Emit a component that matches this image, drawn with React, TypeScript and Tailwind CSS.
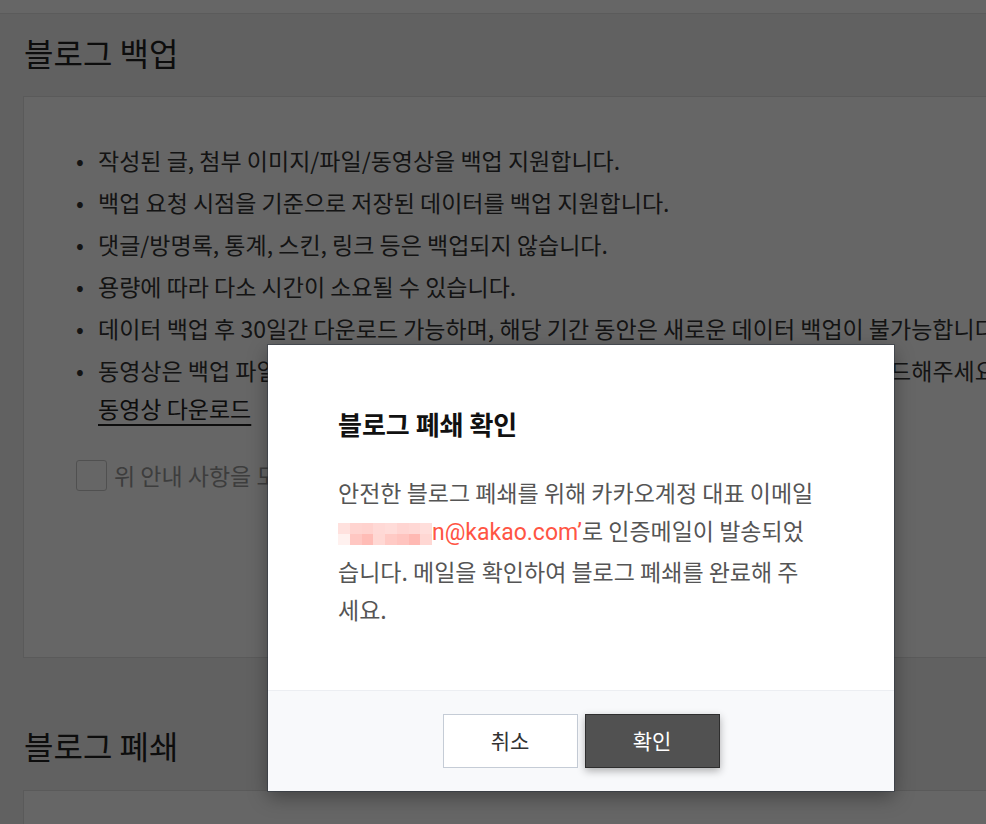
import React from 'react';

const noticeItems = [
  '작성된 글, 첨부 이미지/파일/동영상을 백업 지원합니다.',
  '백업 요청 시점을 기준으로 저장된 데이터를 백업 지원합니다.',
  '댓글/방명록, 통계, 스킨, 링크 등은 백업되지 않습니다.',
  '용량에 따라 다소 시간이 소요될 수 있습니다.',
  '데이터 백업 후 30일간 다운로드 가능하며, 해당 기간 동안은 새로운 데이터 백업이 불가능합니다.',
];

// pixelated (mosaic) part of the masked email address
const mosaic = [
  '#ffe1de', '#ffd4d0', '#ffd2ce', '#ffd9d6', '#ffdcd9', '#ffd5d2', '#ffd8d5', '#ffdedb',
  '#fff1ef', '#ffc7c2', '#ffbcb6', '#ffd8d4', '#ffcac5', '#ffc4bf', '#ffb9b3', '#ffd7d3',
];

function MaskedEmail() {
  return (
    <span className="inline-grid h-[22px] w-[94px] grid-cols-8 align-middle">
      {mosaic.map((c, i) => (
        <span key={i} style={{ backgroundColor: c }} />
      ))}
    </span>
  );
}

function ConfirmModal() {
  return (
    <div className="absolute left-[268px] top-[345px] w-[626px] bg-white shadow-[0_0_0_1px_rgba(40,48,62,0.45),0_6px_18px_rgba(0,0,0,0.35)]">
      {/* Body */}
      <div className="h-[345px] px-[70px] pt-[61px]">
        <h3 className="text-[26px] font-bold leading-[36px] text-[#111]">블로그 폐쇄 확인</h3>
        <p className="mt-[31px] whitespace-nowrap text-[23px] leading-[38px] text-[#555]">
          안전한 블로그 폐쇄를 위해 카카오계정 대표 이메일
          <br />
          <MaskedEmail />
          <span className="font-['Roboto',sans-serif] text-[#ff5544]">n@kakao.com’</span>로 인증메일이 발송되었
          <br />
          습니다. 메일을 확인하여 블로그 폐쇄를 완료해 주
          <br />
          세요.
        </p>
      </div>

      {/* Footer */}
      <div className="flex h-[101px] items-start justify-center gap-[7px] border-t border-[#eceef2] bg-[#f8f9fb] pt-[23px]">
        <button className="h-[54px] w-[135px] border border-[#c5ccd6] bg-white text-[21px] text-[#333]">
          취소
        </button>
        <button className="h-[54px] w-[135px] border border-[#2e2e2e] bg-[#515151] text-[21px] text-white shadow-[0_3px_8px_rgba(0,0,0,0.3)]">
          확인
        </button>
      </div>
    </div>
  );
}

export default function App() {
  return (
    <div className="relative h-[824px] w-[986px] overflow-hidden bg-[#f3f3f3] font-['Noto_Sans_CJK_KR',sans-serif]">
      <div className="h-[14px] border-b border-[#e3e3e3] bg-white" />

      <main className="w-[1300px] pl-[23px]">
        {/* Blog backup */}
        <h2 className="mt-[17px] pl-[1px] text-[32px] leading-[42px] text-[#222]">블로그 백업</h2>
        <section className="mt-[23px] h-[562px] border border-[#e2e2e2] bg-white pl-[52px] pt-[42px]">
          <ul className="text-[23px] leading-[42px] text-[#333]">
            {noticeItems.map((item) => (
              <li key={item} className="flex whitespace-nowrap">
                <span className="w-[22px] shrink-0">•</span>
                {item}
              </li>
            ))}
            <li className="flex whitespace-nowrap">
              <span className="w-[22px] shrink-0">•</span>
              <div>
                <p>동영상은 백업 파일에 포함되지 않으므로 아래 링크를 통해 영상을 개별적으로 다운로드해주세요.</p>
                <a className="block leading-[34px] text-[#222] underline decoration-[1.5px] underline-offset-[6px]">
                  동영상 다운로드
                </a>
              </div>
            </li>
          </ul>

          <label className="mt-[33px] flex items-center gap-[7px] text-[23px] text-[#999]">
            <span className="h-[31px] w-[31px] rounded-[3px] border border-[#c9c9c9] bg-white" />
            위 안내 사항을 모두 확인하였으며, 이에 동의합니다.
          </label>
        </section>

        {/* Blog closing */}
        <h2 className="mt-[66px] pl-[1px] text-[32px] leading-[42px] text-[#222]">블로그 폐쇄</h2>
        <section className="mt-[24px] h-[200px] border border-[#e2e2e2] bg-white" />
      </main>

      {/* Dim overlay + dialog */}
      <div className="absolute inset-0 bg-black/60">
        <ConfirmModal />
      </div>
    </div>
  );
}
